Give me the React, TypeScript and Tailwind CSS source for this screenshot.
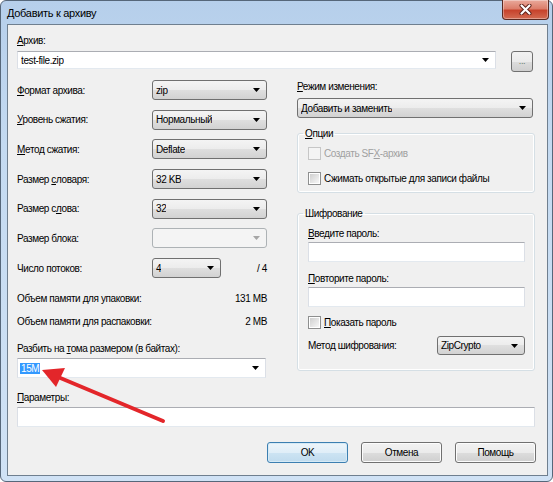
import React from 'react';

const Arrow = ({ disabled }: { disabled?: boolean }) => (
  <svg width="7" height="4" viewBox="0 0 7 4" className="shrink-0">
    <path d="M0 0h7L3.5 4z" fill={disabled ? '#a6a6a6' : '#000'} />
  </svg>
);

type ComboProps = {
  value?: React.ReactNode;
  kind?: 'list' | 'edit' | 'off';
  className?: string;
};

const Combo = ({ value, kind = 'list', className = '' }: ComboProps) => {
  const look =
    kind === 'list'
      ? 'border-[#707070] rounded-[3px] bg-[linear-gradient(#f4f4f4_0%,#ececec_50%,#dfdfdf_50%,#d2d2d2_100%)]'
      : kind === 'edit'
      ? 'border-[#abadb3] border-b-[#e3e9ef] border-x-[#dbdfe6] bg-white'
      : 'border-[#adb2b5] rounded-[3px] bg-[#f4f4f4]';
  return (
    <div className={`flex items-center justify-between border pl-[3px] pr-[6px] ${look} ${className}`}>
      <span className="truncate">{value}</span>
      <Arrow disabled={kind === 'off'} />
    </div>
  );
};

const TextBox = ({ className = '' }: { className?: string }) => (
  <div className={`h-[20px] border border-[#abadb3] border-x-[#dbdfe6] border-b-[#e3e9ef] bg-white ${className}`} />
);

const Check = ({ label, disabled }: { label: React.ReactNode; disabled?: boolean }) => (
  <div className={`flex items-center h-[13px] ${disabled ? 'text-[#a0a0a0]' : ''}`}>
    <div
      className={`w-[13px] h-[13px] border p-[1px] shrink-0 ${
        disabled ? 'border-[#c6c6c6] bg-[#f4f4f4]' : 'border-[#8e8f8f] bg-white'
      }`}
    >
      <div
        className={`w-full h-full ${
          disabled ? 'bg-[#f4f4f4]' : 'bg-[linear-gradient(135deg,#cfcfcf,#f7f7f7)]'
        }`}
      />
    </div>
    <span className="ml-[3px]">{label}</span>
  </div>
);

const Btn = ({ children, primary }: { children: React.ReactNode; primary?: boolean }) => (
  <div
    className={`w-[81px] h-[21px] flex items-center justify-center rounded-[3px] border ${
      primary
        ? 'border-[#3c7fb1] bg-[linear-gradient(#edf5fa_0%,#e0eef8_50%,#cde4f3_50%,#c0dbee_100%)] shadow-[inset_0_0_0_1px_#d6eaf6]'
        : 'border-[#707070] bg-[linear-gradient(#f2f2f2_0%,#ebebeb_50%,#dddddd_50%,#cfcfcf_100%)] shadow-[inset_0_0_0_1px_#fcfcfc]'
    }`}
  >
    {children}
  </div>
);

const U = ({ children }: { children: React.ReactNode }) => <span className="underline underline-offset-[1px]">{children}</span>;

const Row = ({ label, value, kind, narrow }: { label: React.ReactNode; value?: string; kind?: 'list' | 'off'; narrow?: boolean }) => (
  <div className="flex items-center h-[20px]">
    <div className="w-[135px]">{label}</div>
    {narrow ? (
      <>
        <Combo value={value} kind={kind} className="w-[69px] h-[20px]" />
        <div className="flex-1 text-right">/ 4</div>
      </>
    ) : (
      <Combo value={value} kind={kind} className="w-[115px] h-[20px]" />
    )}
  </div>
);

const CloseButton = () => (
  <div className="-mt-[1px] mr-[3px] w-[47px] h-[20px] rounded-b-[4px] border border-t-0 border-[#5a2a22] bg-[linear-gradient(#e9a99b_0%,#dc7e6b_45%,#c7432c_55%,#d36b52_100%)] flex items-center justify-center shadow-[inset_0_0_0_1px_rgba(255,255,255,0.35)]">
    <svg width="13" height="11" viewBox="0 0 13 11">
      <path d="M2.5 1.5l8 8M10.5 1.5l-8 8" stroke="#5b1f17" strokeWidth="4" strokeLinecap="round" />
      <path d="M2.5 1.5l8 8M10.5 1.5l-8 8" stroke="#ffffff" strokeWidth="2.2" strokeLinecap="round" />
    </svg>
  </div>
);

export default function App() {
  return (
    <div className="w-[553px] h-[482px] bg-white font-['Liberation_Sans',Arial,sans-serif] text-[10px] tracking-[-0.4px] leading-[13px] text-black">
      <div className="relative w-full h-full rounded-[6px] border border-[#56677a] bg-[linear-gradient(180deg,#b6cfeb_0%,#c4daf1_30%,#d0e2f5_100%)] flex flex-col">
        <div className="h-[23px] flex items-start justify-between">
          <div className="pl-[6px] pt-[5px] text-[11px] tracking-[-0.3px] leading-[15px]">Добавить к архиву</div>
          <CloseButton />
        </div>

        <div className="ml-[6px] w-[541px] h-[452px] border border-[#6f7f8f] bg-[#f0f0f0] pl-[9px] pt-[9px] flex flex-col">
          <div>
            <U>А</U>рхив:
          </div>
          <div className="flex items-start mt-[4px]">
            <Combo value="test-file.zip" kind="edit" className="w-[479px] h-[18px]" />
            <div className="ml-[15px] w-[22px] h-[21px] rounded-[3px] border border-[#707070] bg-[linear-gradient(#f2f2f2_0%,#ebebeb_50%,#dddddd_50%,#cfcfcf_100%)] flex items-center justify-center text-[#6b7b6b] text-[9px]">
              ...
            </div>
          </div>

          <div className="flex mt-[8px]">
            {/* left column */}
            <div className="w-[250px] flex flex-col">
              <div className="flex flex-col gap-[9.7px]">
                <Row label={<><U>Ф</U>ормат архива:</>} value="zip" />
                <Row label={<><U>У</U>ровень сжатия:</>} value="Нормальный" />
                <Row label={<><U>М</U>етод сжатия:</>} value="Deflate" />
                <Row label={<>Размер <U>с</U>ловаря:</>} value="32 KB" />
                <Row label={<>Размер с<U>л</U>ова:</>} value="32" />
                <Row label="Размер блока:" kind="off" />
                <Row label="Число потоков:" value="4" narrow />
              </div>
              <div className="flex justify-between mt-[14px]">
                <span>Объем памяти для упаковки:</span>
                <span>131 MB</span>
              </div>
              <div className="flex justify-between mt-[10px]">
                <span>Объем памяти для распаковки:</span>
                <span>2 MB</span>
              </div>
              <div className="mt-[14px]">
                Разбить на <U>т</U>ома размером (в байтах):
              </div>
              <Combo
                kind="edit"
                className="mt-[3px] h-[20px] w-[249px] !pl-[2px]"
                value={<span className="bg-[#3399ff] text-white px-[1px]">15M</span>}
              />
            </div>

            {/* right column */}
            <div className="ml-[30px] w-[238px] flex flex-col">
              <div>
                <U>Р</U>ежим изменения:
              </div>
              <Combo value="Добавить и заменить" className="mt-[5px] w-[236px] h-[20px]" />

              <fieldset className="mt-[9px] h-[66px] border border-[#d5dfe5] rounded-[3px] shadow-[inset_0_0_0_1px_#ffffff] pl-[10px]">
                <legend className="ml-[-5px] px-[2px]">
                  <U>О</U>пции
                </legend>
                <div className="mt-[7px]">
                  <Check disabled label={<>Создать SF<U>X</U>-архив</>} />
                </div>
                <div className="mt-[12px]">
                  <Check label="Сжимать открытые для записи файлы" />
                </div>
              </fieldset>

              <fieldset className="mt-[14px] h-[164px] border border-[#d5dfe5] rounded-[3px] shadow-[inset_0_0_0_1px_#ffffff] pl-[10px]">
                <legend className="ml-[-5px] px-[2px]">Шифрование</legend>
                <div className="mt-[7px]">
                  <U>В</U>ведите пароль:
                </div>
                <TextBox className="mt-[2px] w-[217px]" />
                <div className="mt-[10px]">
                  <U>П</U>овторите пароль:
                </div>
                <TextBox className="mt-[2px] w-[217px]" />
                <div className="mt-[9px]">
                  <Check label={<><U>П</U>оказать пароль</>} />
                </div>
                <div className="mt-[7px] flex items-center w-[217px] justify-between">
                  <span>Метод шифрования:</span>
                  <Combo value="ZipCrypto" className="w-[88px] h-[19px]" />
                </div>
              </fieldset>
            </div>
          </div>

          <div className="mt-[13px]">
            <U>П</U>араметры:
          </div>
          <TextBox className="mt-[3px] w-[518px]" />

          <div className="mt-[15px] ml-[250px] flex gap-[13px]">
            <Btn primary>OK</Btn>
            <Btn>Отмена</Btn>
            <Btn>Помощь</Btn>
          </div>
        </div>

        <svg className="absolute left-[-1px] top-[-1px] pointer-events-none" width="553" height="482" viewBox="0 0 553 482">
          <line x1="163" y1="421" x2="58" y2="377" stroke="#e3262a" strokeWidth="4" strokeLinecap="round" />
          <polygon points="42,370 65,368 56,387" fill="#e3262a" />
        </svg>
      </div>
    </div>
  );
}
